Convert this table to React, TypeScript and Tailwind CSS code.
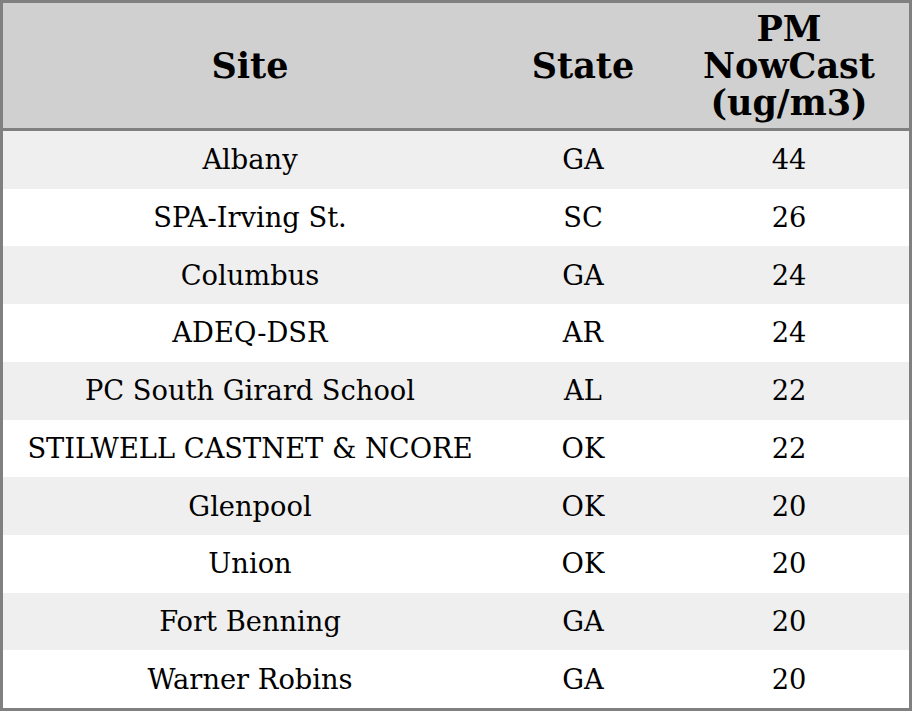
const rows: [string, string, number][] = [
  ['Albany', 'GA', 44],
  ['SPA-Irving St.', 'SC', 26],
  ['Columbus', 'GA', 24],
  ['ADEQ-DSR', 'AR', 24],
  ['PC South Girard School', 'AL', 22],
  ['STILWELL CASTNET & NCORE', 'OK', 22],
  ['Glenpool', 'OK', 20],
  ['Union', 'OK', 20],
  ['Fort Benning', 'GA', 20],
  ['Warner Robins', 'GA', 20],
];

export default function App() {
  return (
    <div
      className="w-[912px] h-[711px] border-[3px] border-[#808080] flex flex-col bg-white text-black"
      style={{ fontFamily: '"DejaVu Serif", serif' }}
    >
      {/* Header */}
      <div className="h-[128px] shrink-0 flex items-center bg-[#d0d0d0] border-b-[3px] border-[#808080] font-bold text-[35px] leading-[37px]">
        <div className="w-[494px] text-center">Site</div>
        <div className="w-[172px] text-center">State</div>
        <div className="flex-1 text-center">
          PM
          <br />
          NowCast
          <br />
          (ug/m3)
        </div>
      </div>

      {/* Rows */}
      {rows.map(([site, state, value], i) => (
        <div
          key={site}
          className={`flex-1 flex items-center pt-[2px] text-[27.3px] ${i % 2 === 0 ? 'bg-[#efefef]' : 'bg-white'}`}
        >
          <div className="w-[494px] text-center whitespace-nowrap">{site}</div>
          <div className="w-[172px] text-center">{state}</div>
          <div className="flex-1 text-center">{value}</div>
        </div>
      ))}
    </div>
  );
}
